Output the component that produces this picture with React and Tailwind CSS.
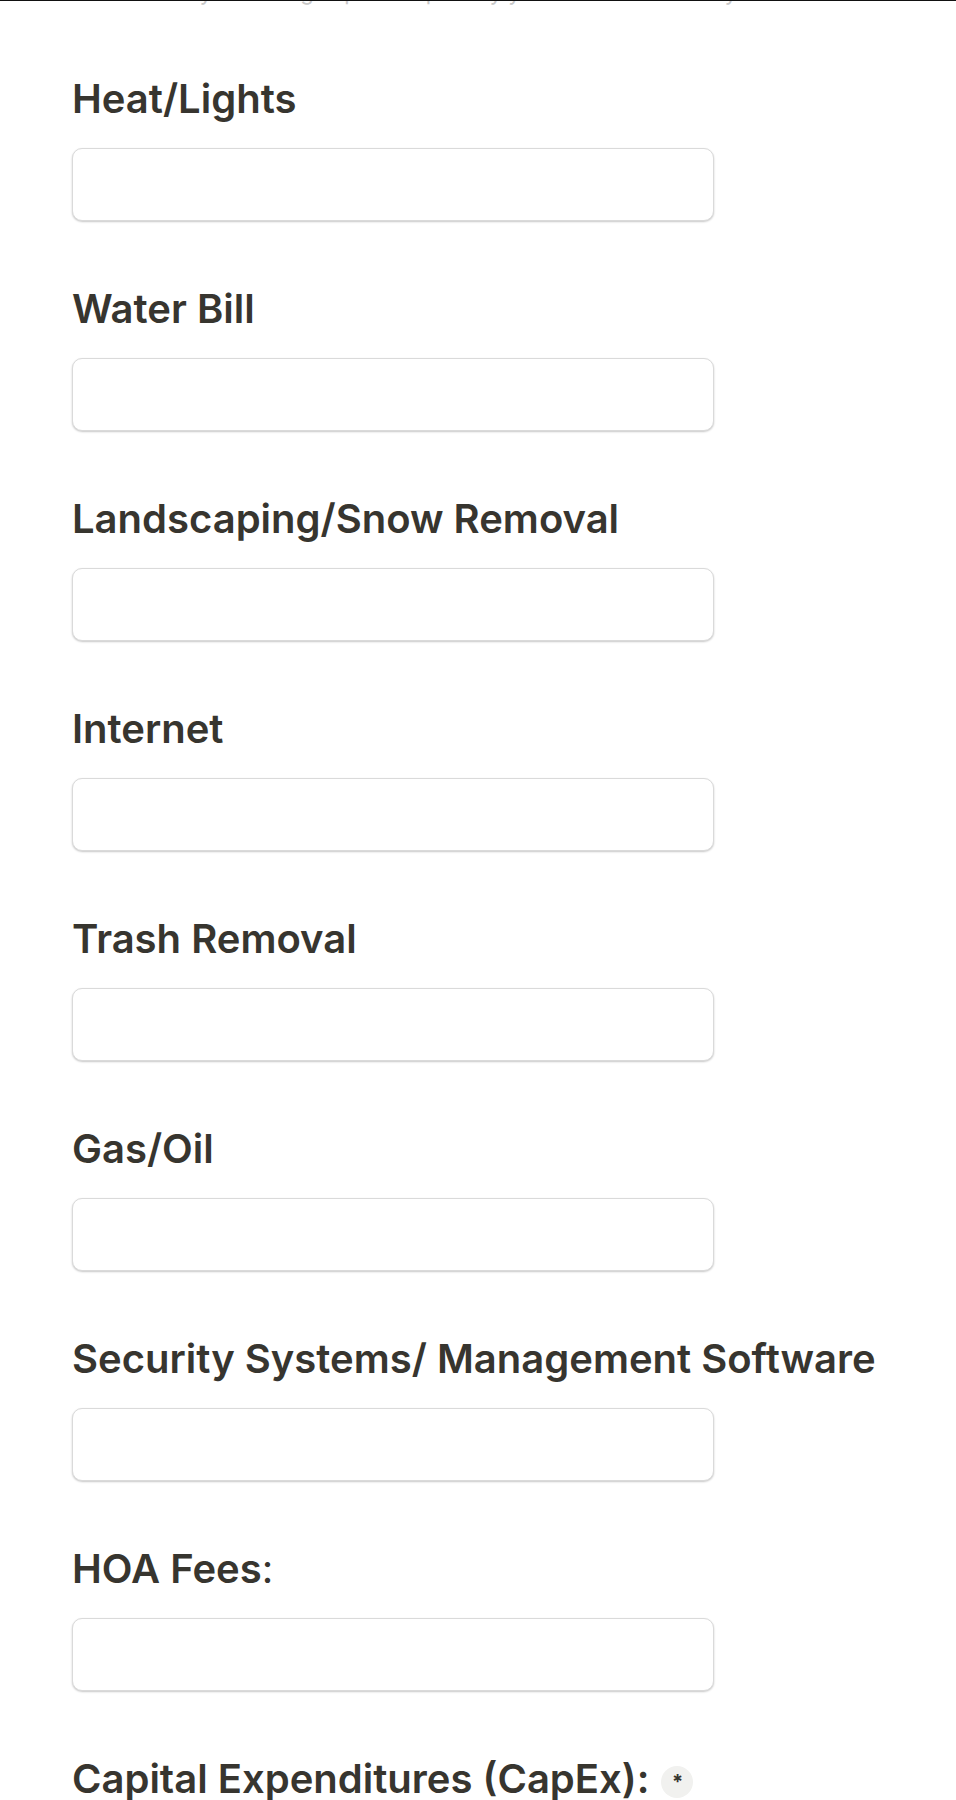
const fields = [
  "Heat/Lights",
  "Water Bill",
  "Landscaping/Snow Removal",
  "Internet",
  "Trash Removal",
  "Gas/Oil",
  "Security Systems/ Management Software",
  "HOA Fees",
];

function Field({ label }) {
  return (
    <div className="flex flex-col">
      <label className="text-[40px] leading-[48px] font-semibold text-[#37352f]">
        {label}
        {label === "HOA Fees" && <span className="font-normal">:</span>}
      </label>
      <input
        type="text"
        className="mt-[25px] h-[73px] w-[642px] rounded-[10px] border border-[#dadada] bg-white shadow-[0_1px_2px_rgba(0,0,0,0.22)] outline-none"
      />
    </div>
  );
}

export default function App() {
  return (
    <div className="min-h-[1800px] w-[956px] overflow-hidden bg-white font-['Inter','Noto_Sans',sans-serif]">
      <div className="h-px w-full bg-[#111]" />
      <div className="h-[6px] overflow-hidden pl-[128px]">
        <p className="-mt-[22px] text-[22px] leading-[26px] text-[#c8c8c8]">
          Monthly recurring expenses paid by you as the owner only
        </p>
      </div>
      <div className="flex flex-col gap-[64px] pl-[72px] pt-[68px]">
        {fields.map((f) => (
          <Field key={f} label={f} />
        ))}
        <div className="flex items-center">
          <span className="text-[40px] leading-[48px] font-semibold text-[#37352f]">
            Capital Expenditures (CapEx):
          </span>
          <span className="ml-[12px] mt-[6px] flex h-[32px] w-[32px] items-center justify-center rounded-full bg-[#f1f1ef] text-[20px] font-bold text-[#37352f]">
            *
          </span>
        </div>
      </div>
    </div>
  );
}
